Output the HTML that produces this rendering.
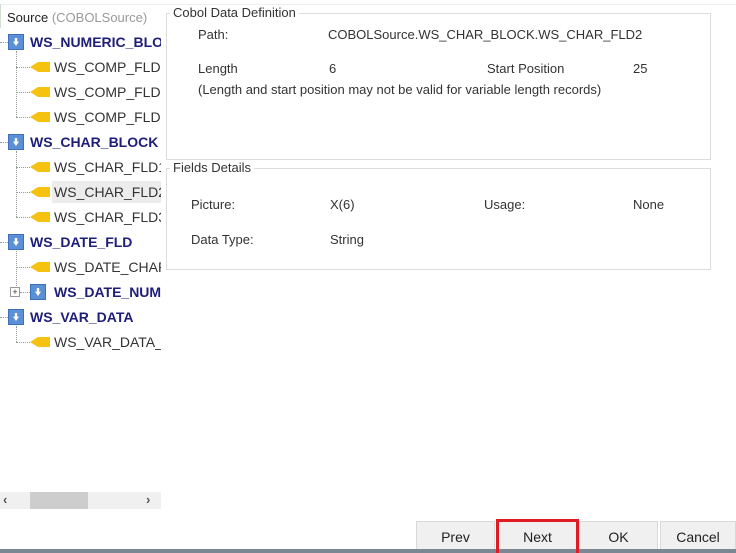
<!DOCTYPE html>
<html><head><style>
body{margin:0;width:736px;height:553px;background:#fff;position:relative;overflow:hidden;font-family:"Liberation Sans",sans-serif;}
.a{position:absolute;white-space:nowrap;}
.t{font-size:14px;color:#333;}
.b{font-size:14px;font-weight:bold;color:#1e1e78;}
.f{font-size:13px;color:#333;}
.bi{position:absolute;width:14px;height:14px;background:#5b8fd6;border:1px solid #3f6fb8;}
.bi:after{content:"";position:absolute;left:4px;top:3px;width:6px;height:8px;background:#fff;clip-path:polygon(30% 0,70% 0,70% 45%,100% 45%,50% 100%,0 45%,30% 45%);}
.leaf{position:absolute;width:20px;height:10px;background:#f5c211;clip-path:polygon(0 50%,40% 0,100% 0,100% 100%,40% 100%);}
.vl{position:absolute;border-left:1px dotted #999;width:0;}
.hl{position:absolute;border-top:1px dotted #999;height:0;}
.gb{position:absolute;border:1px solid #dcdcdc;}
.btn{position:absolute;top:521px;height:32px;background:#f0f0f0;border:1px solid #d9d9d9;box-sizing:border-box;font-size:14px;color:#222;text-align:center;line-height:30px;font-family:"Liberation Sans Narrow","Liberation Sans",sans-serif;}
</style></head><body>
<div class="a" style="left:0;top:4px;width:736px;border-top:1px solid #eee"></div>
<div class="a" style="left:0;top:4px;width:160px;height:480px;overflow:hidden">
<div class="a" style="left:0;top:0;width:1px;height:24px;background:#cfe0cf"></div>
<div class="a t" style="left:7px;top:6px;font-size:13px;color:#222">Source <span style="color:#999">(COBOLSource)</span></div>
</div>
<div class="a" style="left:0;top:0;width:161px;height:480px;overflow:hidden">
<!-- dotted lines -->
<div class="hl" style="left:0;top:42px;width:8px"></div>
<div class="hl" style="left:0;top:142px;width:8px"></div>
<div class="hl" style="left:0;top:242px;width:8px"></div>
<div class="hl" style="left:0;top:317px;width:8px"></div>
<div class="vl" style="left:16px;top:51px;height:66px"></div>
<div class="vl" style="left:16px;top:151px;height:66px"></div>
<div class="vl" style="left:16px;top:251px;height:41px"></div>
<div class="vl" style="left:16px;top:326px;height:16px"></div>
<div class="hl" style="left:16px;top:67px;width:14px"></div>
<div class="hl" style="left:16px;top:92px;width:14px"></div>
<div class="hl" style="left:16px;top:117px;width:14px"></div>
<div class="hl" style="left:16px;top:167px;width:14px"></div>
<div class="hl" style="left:16px;top:192px;width:14px"></div>
<div class="hl" style="left:16px;top:217px;width:14px"></div>
<div class="hl" style="left:16px;top:267px;width:14px"></div>
<div class="hl" style="left:20px;top:292px;width:10px"></div>
<div class="hl" style="left:16px;top:342px;width:14px"></div>
<!-- selection -->
<div class="a" style="left:52px;top:181px;width:110px;height:22px;background:#ececec"></div>
<!-- top level -->
<div class="bi" style="left:8px;top:34px"></div><div class="a b" style="left:30px;top:34px">WS_NUMERIC_BLOCK</div>
<div class="bi" style="left:8px;top:134px"></div><div class="a b" style="left:30px;top:134px">WS_CHAR_BLOCK</div>
<div class="bi" style="left:8px;top:234px"></div><div class="a b" style="left:30px;top:234px">WS_DATE_FLD</div>
<div class="bi" style="left:8px;top:309px"></div><div class="a b" style="left:30px;top:309px">WS_VAR_DATA</div>
<div class="a" style="left:10px;top:287px;width:8px;height:8px;border:1px solid #999;background:#fff;font-size:9px;line-height:8px;text-align:center;color:#333">+</div>
<div class="bi" style="left:30px;top:284px"></div><div class="a b" style="left:54px;top:284px">WS_DATE_NUM</div>
<!-- leaves -->
<div class="leaf" style="left:30px;top:62px"></div><div class="a t" style="left:54px;top:59px">WS_COMP_FLD1</div>
<div class="leaf" style="left:30px;top:87px"></div><div class="a t" style="left:54px;top:84px">WS_COMP_FLD2</div>
<div class="leaf" style="left:30px;top:112px"></div><div class="a t" style="left:54px;top:109px">WS_COMP_FLD3</div>
<div class="leaf" style="left:30px;top:162px"></div><div class="a t" style="left:54px;top:159px">WS_CHAR_FLD1</div>
<div class="leaf" style="left:30px;top:187px"></div><div class="a t" style="left:54px;top:184px">WS_CHAR_FLD2</div>
<div class="leaf" style="left:30px;top:212px"></div><div class="a t" style="left:54px;top:209px">WS_CHAR_FLD3</div>
<div class="leaf" style="left:30px;top:262px"></div><div class="a t" style="left:54px;top:259px">WS_DATE_CHAR</div>
<div class="leaf" style="left:30px;top:337px"></div><div class="a t" style="left:54px;top:334px">WS_VAR_DATA_</div>
</div>
<!-- scrollbar -->
<div class="a" style="left:0;top:492px;width:161px;height:17px;background:#f0f0f0"></div>
<div class="a" style="left:30px;top:492px;width:58px;height:17px;background:#cdcdcd"></div>
<div class="a" style="left:3px;top:492px;font-size:13px;font-weight:bold;color:#555">‹</div>
<div class="a" style="left:146px;top:492px;font-size:13px;font-weight:bold;color:#555">›</div>
<!-- group boxes -->
<div class="gb" style="left:166px;top:13px;width:543px;height:145px"></div>
<div class="a f" style="left:170px;top:5px;background:#fff;padding:0 3px;color:#333">Cobol Data Definition</div>
<div class="a f" style="left:198px;top:27px">Path:</div>
<div class="a f" style="left:328px;top:27px">COBOLSource.WS_CHAR_BLOCK.WS_CHAR_FLD2</div>
<div class="a f" style="left:198px;top:61px">Length</div>
<div class="a f" style="left:329px;top:61px">6</div>
<div class="a f" style="left:487px;top:61px">Start Position</div>
<div class="a f" style="left:633px;top:61px">25</div>
<div class="a f" style="left:198px;top:82px">(Length and start position may not be valid for variable length records)</div>
<div class="gb" style="left:166px;top:168px;width:543px;height:100px"></div>
<div class="a f" style="left:170px;top:160px;background:#fff;padding:0 3px">Fields Details</div>
<div class="a f" style="left:191px;top:197px">Picture:</div>
<div class="a f" style="left:330px;top:197px">X(6)</div>
<div class="a f" style="left:484px;top:197px">Usage:</div>
<div class="a f" style="left:633px;top:197px">None</div>
<div class="a f" style="left:191px;top:232px">Data Type:</div>
<div class="a f" style="left:330px;top:232px">String</div>
<!-- buttons -->
<div class="btn" style="left:416px;width:79px">Prev</div>
<div class="btn" style="left:496px;width:83px;background:#f0f0f0;border:3px solid #e01b24;top:519px;height:34px;line-height:30px">Next</div>
<div class="btn" style="left:579px;width:79px">OK</div>
<div class="btn" style="left:660px;width:76px">Cancel</div>
<div class="a" style="left:0;top:549px;width:736px;height:4px;background:#7b8894"></div>
<div class="a" style="left:496px;top:549px;width:83px;height:4px;border-left:3px solid #e01b24;border-right:3px solid #e01b24;box-sizing:border-box"></div>
</body></html>
